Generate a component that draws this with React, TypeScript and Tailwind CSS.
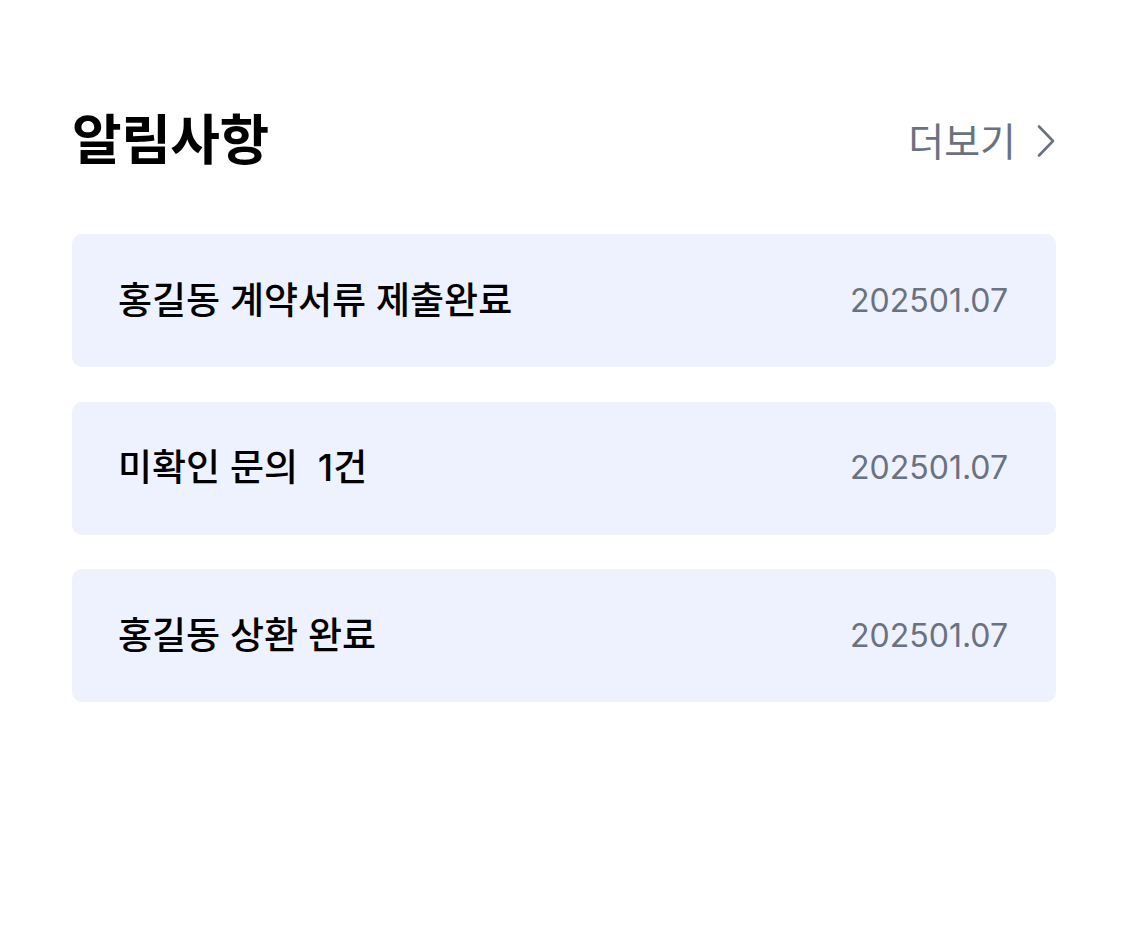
const notices = [
  { title: "홍길동 계약서류 제출완료", date: "202501.07" },
  { title: "미확인 문의  1건", date: "202501.07" },
  { title: "홍길동 상환 완료", date: "202501.07" },
];

function ChevronRight() {
  return (
    <svg width="20" height="34" viewBox="0 0 20 34" fill="none">
      <path d="M3 2.5 17 17 3 31.5" stroke="currentColor" strokeWidth="2.6" strokeLinecap="round" strokeLinejoin="round" />
    </svg>
  );
}

export default function App() {
  return (
    <div className="min-h-[928px] bg-white px-[72px] pt-[112px] font-['Inter','Noto_Sans_CJK_KR',sans-serif]">
      {/* Header */}
      <div className="flex h-[58px] items-center justify-between">
        <h2 className="text-[54px] font-bold leading-none tracking-[-0.5px] text-black">알림사항</h2>
        <button className="flex items-center gap-5 text-[39px] leading-none text-gray-500">
          더보기
          <ChevronRight />
        </button>
      </div>

      {/* Notice list */}
      <ul className="mt-16 flex flex-col gap-[34.5px]">
        {notices.map((n, i) => (
          <li key={i} className="flex h-[133px] items-center justify-between rounded-[10px] bg-[#eef2ff] pl-[46px] pr-12">
            <span className="whitespace-pre text-[37px] font-medium text-black">{n.title}</span>
            <span className="text-[32px] text-gray-500">{n.date}</span>
          </li>
        ))}
      </ul>
    </div>
  );
}
